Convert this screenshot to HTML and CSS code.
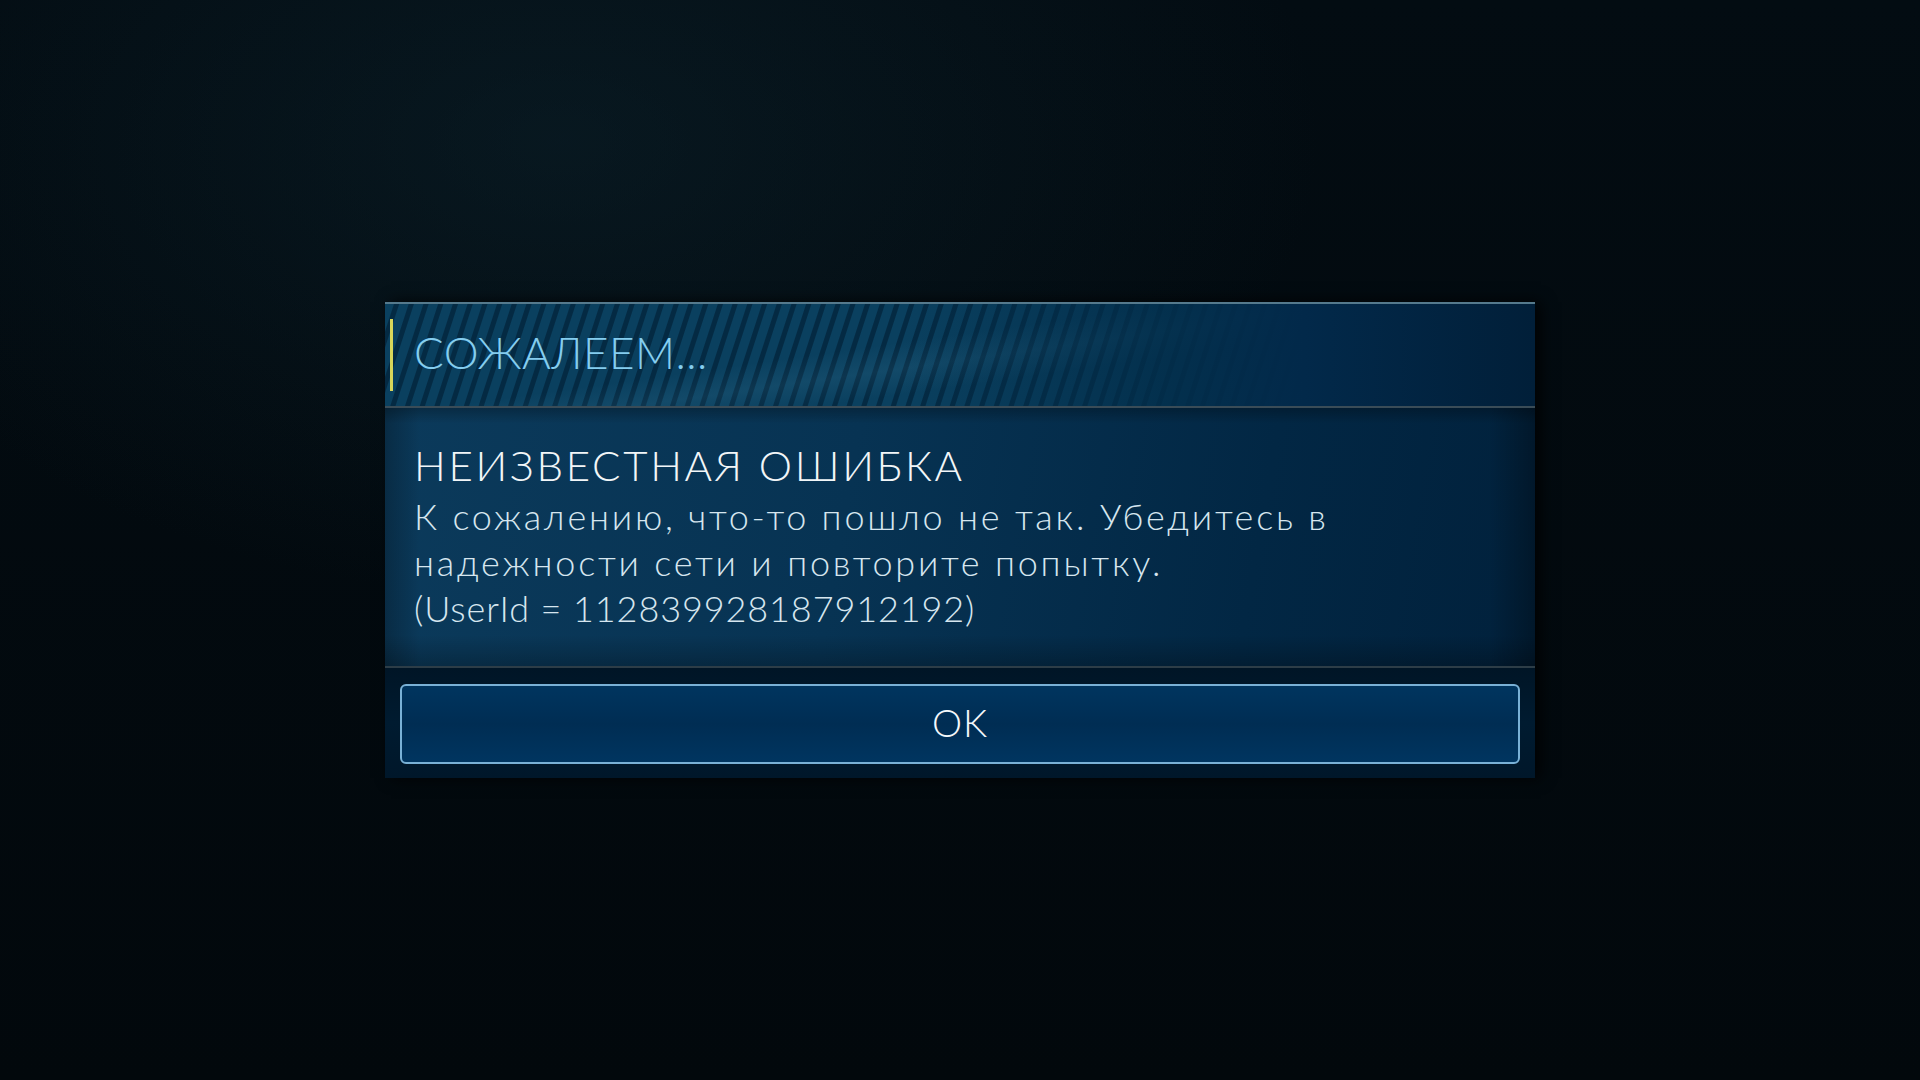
FILE: index.html
```html
<!DOCTYPE html>
<html lang="ru">
<head>
    <meta charset="UTF-8">
    <meta name="viewport" content="width=device-width, initial-scale=1.0">
    <title>Сожалеем...</title>
    <link rel="stylesheet" href="styles.css">
</head>
<body>

    <div class="dialog">
        <!-- заголовок окна -->
        <div class="dialog-header">
            <span class="accent"></span>
            <h1 class="dialog-title">СОЖАЛЕЕМ...</h1>
        </div>

        <!-- текст ошибки -->
        <div class="dialog-body">
            <h2 class="error-title">НЕИЗВЕСТНАЯ ОШИБКА</h2>
            <p class="error-text">К сожалению, что-то пошло не так. Убедитесь в<br>надежности сети и повторите попытку.<br><span class="user-id">(UserId = 112839928187912192)</span></p>
        </div>

        <!-- кнопка -->
        <div class="dialog-footer">
            <button class="ok-button">OK</button>
        </div>
    </div>

</body>
</html>
```

FILE: styles.css
```css
body {
    font-family: Lato, "Open Sans", sans-serif;
    display: flex;
    justify-content: center;
    align-items: center;
    height: 100vh;
    margin: 0;
    background-color: #020a0f;
    background-image:
        radial-gradient(ellipse 760px 460px at 560px 140px, rgba(16, 44, 56, 0.38), rgba(16, 44, 56, 0) 100%),
        linear-gradient(180deg, #030c12 0%, #02080c 100%);
}

.dialog {
    width: 1150px;
    display: flex;
    flex-direction: column;
    box-shadow: 6px 0 14px rgba(0, 0, 0, 0.8);
}

.dialog-header {
    height: 106px;
    box-sizing: border-box;
    display: flex;
    align-items: center;
    gap: 21px;
    padding: 0 0 6px 5px;
    border-top: 2px solid #557a8d;
    border-bottom: 2px solid #3a4c57;
    background-color: #033150;
    background-image:
        linear-gradient(90deg, rgba(2, 45, 74, 0) 0%, rgba(2, 45, 74, 0) 45%, rgba(2, 45, 74, 0.85) 68%, #02294a 80%, #011f39 100%),
        linear-gradient(172deg, rgba(255, 255, 255, 0) 42%, rgba(120, 190, 220, 0.08) 52%, rgba(255, 255, 255, 0) 62%),
        repeating-linear-gradient(108deg, #0a405f 0px, #0a405f 8px, #042a43 9px, #042a43 13px, #0a405f 14px);
}

.accent {
    width: 3px;
    height: 72px;
    margin-top: 6px;
    background-color: #d8d65a;
}

.dialog-title {
    margin: 0;
    font-size: 44px;
    font-weight: 300;
    color: #84cdef;
    letter-spacing: 0.5px;
}

.dialog-body {
    height: 260px;
    box-sizing: border-box;
    padding: 29px 28px 0 29px;
    border-bottom: 2px solid #2d3d47;
    background:
        linear-gradient(90deg, rgba(0, 0, 0, 0.25) 0%, rgba(0, 0, 0, 0) 3%, rgba(0, 0, 0, 0) 96%, rgba(0, 0, 0, 0.3) 100%),
        linear-gradient(180deg, rgba(0, 0, 0, 0.25) 0%, rgba(0, 0, 0, 0) 6%, rgba(0, 0, 0, 0) 88%, rgba(0, 0, 0, 0.25) 100%),
        linear-gradient(100deg, #0b3a5b 0%, #073353 40%, #022744 75%, #01213c 100%);
}

.error-title {
    margin: 0;
    font-size: 42px;
    font-weight: 300;
    line-height: 56px;
    letter-spacing: 2.7px;
    color: #f2f6f8;
}

.error-text {
    margin: 0;
    font-size: 36px;
    font-weight: 300;
    line-height: 46px;
    letter-spacing: 2.8px;
    color: #d6e6ef;
}

.user-id {
    letter-spacing: 0.9px;
}

.dialog-footer {
    height: 110px;
    box-sizing: border-box;
    padding: 16px 15px 0 15px;
    background: linear-gradient(180deg, #001526 0%, #001b30 50%, #00172a 100%);
}

.ok-button {
    width: 100%;
    height: 80px;
    padding: 0 0 4px 0;
    font-family: Lato, "Open Sans", sans-serif;
    font-size: 38px;
    font-weight: 300;
    letter-spacing: 1px;
    color: #f4f8fb;
    border: 2px solid #79b1d6;
    border-radius: 6px;
    background: linear-gradient(180deg, #00355f 0%, #002d53 50%, #003560 100%);
    cursor: pointer;
}
```
